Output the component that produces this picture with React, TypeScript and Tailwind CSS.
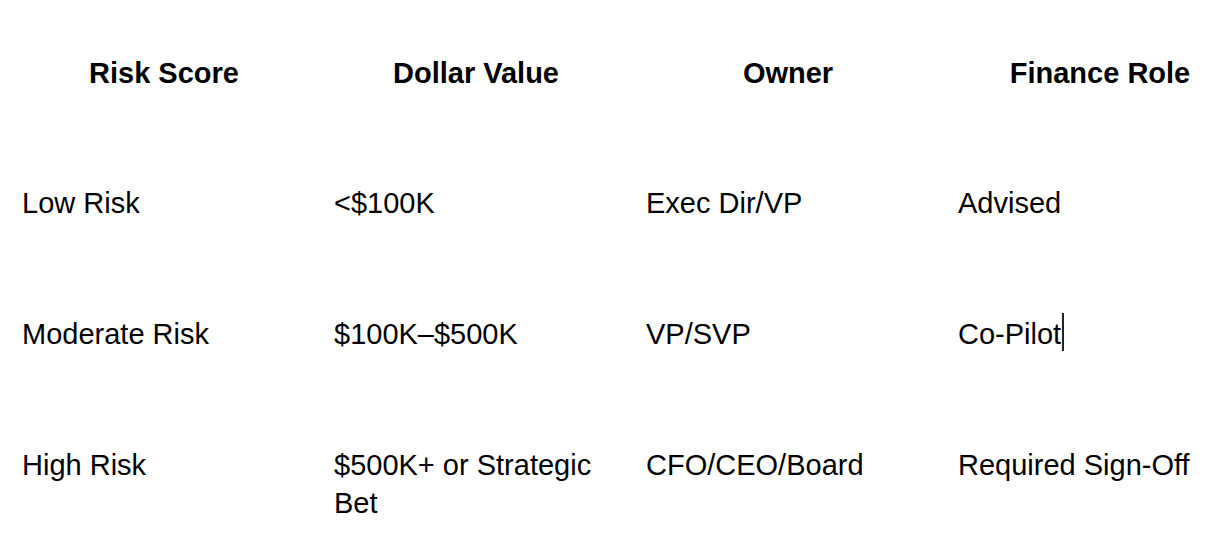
import type { FC } from 'react';

const rows = [
  { score: 'Low Risk', value: '<$100K', owner: 'Exec Dir/VP', role: 'Advised' },
  { score: 'Moderate Risk', value: '$100K–$500K', owner: 'VP/SVP', role: 'Co-Pilot', caret: true },
  { score: 'High Risk', value: '$500K+ or Strategic Bet', owner: 'CFO/CEO/Board', role: 'Required Sign-Off' },
];

const headers = ['Risk Score', 'Dollar Value', 'Owner', 'Finance Role'];

const App: FC = () => {
  return (
    <div className="w-[1220px] h-[558px] overflow-hidden bg-white text-black font-['Liberation_Sans',Arial,sans-serif] text-[29px] leading-[38px]">
      <div className="pl-[8px] pt-[8px]">
        <div className="grid grid-cols-[312px_312px_312px_312px] w-[1248px]">
          {headers.map((h) => (
            <div key={h} className="px-[14px] pt-[46px] pb-[46px] text-center font-bold">
              {h}
            </div>
          ))}
          {rows.map((r) => (
            <div key={r.score} className="contents">
              <div className="px-[14px] pt-[46px] pb-[47px]">{r.score}</div>
              <div className="px-[14px] pt-[46px] pb-[47px]">{r.value}</div>
              <div className="px-[14px] pt-[46px] pb-[47px]">{r.owner}</div>
              <div className="px-[14px] pt-[46px] pb-[47px]">
                <span className="relative">
                  {r.role}
                  {r.caret && (
                    <span className="absolute right-[-3px] top-[-5px] w-[2px] h-[38px] bg-[#222]" />
                  )}
                </span>
              </div>
            </div>
          ))}
        </div>
      </div>
    </div>
  );
};

export default App;
